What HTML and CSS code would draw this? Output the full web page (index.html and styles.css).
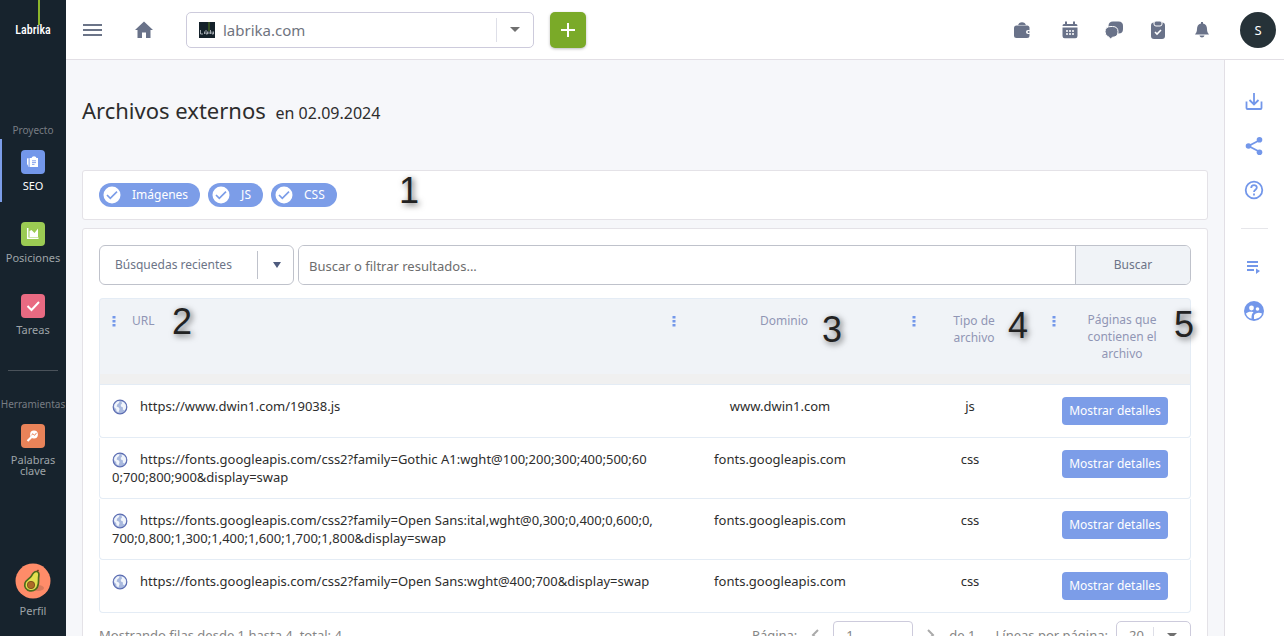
FILE: index.html
```html
<!DOCTYPE html>
<html lang="es">
<head>
<meta charset="utf-8">
<meta name="viewport" content="width=device-width, initial-scale=1">
<title>Archivos externos – Labrika</title>
<link rel="stylesheet" href="styles.css">
</head>
<body>
<svg class="defs" aria-hidden="true">
  <symbol id="globe" viewBox="0 0 16 16"><circle cx="8" cy="8" r="6.800" fill="#a9b9de" stroke="#5c6db2" stroke-width="1.200"/><path d="M2.500 5.500 5 2.500 7.500 2 7 4 5.200 5.400 4.600 7.600 6.800 8.400 7.600 10 6.400 13.500 4.500 12 4.200 10 2 8ZM9.500 2.500 12 3.600 13.800 6 14 9 12.600 11.500 10.800 10.600 11 8.600 9.300 7.800 8.600 6 10 4.600Z" fill="#f1f5fb"/></symbol>
  <symbol id="dots" viewBox="0 0 4 12"><path d="M.5 1h3v2.500h-3zM.5 5h3v2.500h-3zM.5 9h3v2.500h-3z" fill="#7397ea"/></symbol>
  <symbol id="check" viewBox="0 0 18 18"><circle cx="9" cy="9" r="8.500" fill="#fff"/><path d="m4 9 3.300 3.300L14 5.700" fill="none" stroke="#7c9de8" stroke-width="1.700"/></symbol>
</svg>
<div class="app">
  <nav class="sidebar">
    <a class="logo" href="#"><span class="logo-stem"></span>Labrika</a>
    <p class="side-title">Proyecto</p>
    <a class="side-item active" href="#">
      <svg class="tile blue" viewBox="0 0 24 24"><path d="M9 8h1.500q.5-1.800 2.500-1.800T15.500 8H17v9H9zM6 8l1.200.8V16L6 14zM7.600 8h.8v9h-.8z" fill="#fff"/><path d="M11 10.800h4M11 12.600h4M11 14.400h2.500" stroke="#7b9bea" stroke-width=".9"/></svg>
      <span>SEO</span></a>
    <a class="side-item" href="#">
      <svg class="tile green" viewBox="0 0 24 24"><path d="M6.700 6v10.300H17.500" fill="none" stroke="#fff" stroke-width="1.500"/><path d="M8.500 15V9l2-1 3 3L17 6.500V15z" fill="#fff"/></svg>
      <span>Posiciones</span></a>
    <a class="side-item" href="#">
      <svg class="tile pink" viewBox="0 0 24 24"><path d="m6.500 12 4 4 7.500-8" fill="none" stroke="#fff" stroke-width="2"/></svg>
      <span>Tareas</span></a>
    <hr class="side-line">
    <p class="side-title">Herramientas</p>
    <a class="side-item" href="#">
      <svg class="tile orange" viewBox="0 0 24 24"><circle cx="13" cy="10.500" r="3.900" fill="#fff"/><path d="m10.500 13-4 4" stroke="#fff" stroke-width="2.200"/><path d="m10.500 11 1.500-1.300 1.500 1.700 2-2.500" fill="none" stroke="#e88158" stroke-width="1"/></svg>
      <span>Palabras clave</span></a>
    <a class="profile" href="#">
      <svg viewBox="0 0 36 36" width="36" height="36"><circle cx="18" cy="18" r="17.500" fill="#ff8c69"/><ellipse cx="23" cy="25" rx="6" ry="3" fill="#d97a5c"/><path d="M21.500 8.500c2 0 2.800 2 2.300 4.500-.5 3 0 5-.5 8-.7 4.500-4 7.500-8.300 6.800-4-.6-6-4-5-7.500 1-3.800 5-4.500 6.500-7.500 1-2 2.500-4.300 5-4.300z" fill="#e3e04f" stroke="#4d6b1c" stroke-width="1.700"/><circle cx="16" cy="22" r="3.700" fill="#ad6a27" stroke="#744517" stroke-width=".8"/><path d="m22 8.500 1.500-1.500" stroke="#704318" stroke-width="1.500"/></svg>
      <span>Perfil</span></a>
  </nav>

  <div class="page">
    <header class="topbar">
      <button class="icon-btn menu" aria-label="Menú"><svg viewBox="0 0 20 14" width="20" height="14"><path d="M0 2h19M0 7h19M0 12h19" stroke="#6b7488" stroke-width="2"/></svg></button>
      <a class="home" href="#" aria-label="Inicio"><svg viewBox="0 0 18 18" width="18" height="18"><path d="M9 .5 18 9h-2.500v8H11v-5.500H7V17H2.500V9H0z" fill="#697289"/></svg></a>
      <div class="select-box site">
        <svg class="favicon" viewBox="0 0 16 16" width="16" height="16"><path d="M0 0h16v16H0z" fill="#14212a"/><path d="M10 0v9" stroke="#55781f"/><path d="M1.500 8v4H4M5.500 9.500v2.500M7 8v4h1.500V9.500M10 9.500V12M11.500 8v4M13 9.500V12h1.500V9.500" fill="none" stroke="#c5cbd0" stroke-width=".8"/></svg>
        <select aria-label="Proyecto"><option>labrika.com</option></select>
        <svg class="caret" viewBox="0 0 10 5" width="10" height="5"><path d="M0 0h10L5 5z" fill="#707070"/></svg>
      </div>
      <button class="add" aria-label="Añadir"><svg viewBox="0 0 14 14" width="14" height="14"><path d="M7 0v14M0 7h14" stroke="#fff" stroke-width="2"/></svg></button>
      <div class="actions">
        <button class="icon-btn wallet" aria-label="Saldo"><svg viewBox="0 0 18 18"><path d="M5 4.500c.5-4.500 7.500-4.500 8 0z"/><rect x="1" y="4.500" width="15.500" height="12.500" rx="2.500"/><path d="M4.500 4.400h10" stroke="#b9bec9" stroke-width=".8"/><rect x="13" y="9" width="5" height="4" rx="2" fill="#fff"/><circle cx="15.600" cy="11" r="1"/></svg></button>
        <button class="icon-btn" aria-label="Calendario"><svg viewBox="0 0 18 18"><path d="M4 .5h2V3h6V.5h2V3h1Q16.500 3 16.500 5h-15q0-2 1.500-2H4zM1.500 6.500h15V15q0 2.200-2.200 2.200H3.700q-2.200 0-2.200-2.200z"/><path d="M5 10h2M8 10h2M11 10h2M5 13h2M8 13h2M11 13h2" stroke="#fff" stroke-width="1.600"/></svg></button>
        <button class="icon-btn" aria-label="Mensajes"><svg viewBox="0 0 18 18"><path d="M8 .5h5.500Q18 .5 18 5v3q0 4.500-4.500 4.500H8Q4 12 3.500 8V5Q3.500.5 8 .5z"/><path d="M6 5.500h1.500q5.500 0 5.500 5.300T7.500 16.300L5.500 18 4 16.200Q0 15 0 10.800 0 5.500 6 5.500z" stroke="#fff"/></svg></button>
        <button class="icon-btn" aria-label="Tareas"><svg viewBox="0 0 18 18"><rect x="2" y="1.500" width="14" height="16.500" rx="3"/><rect x="5" y="0" width="8" height="5" rx="2" stroke="#fff"/><path d="m6 11 2 2 4-4" fill="none" stroke="#fff" stroke-width="1.600"/></svg></button>
        <button class="icon-btn" aria-label="Avisos"><svg viewBox="0 0 18 18"><path d="M8 1h2v1.500c3 .8 4 3 4 5.500 0 2.500.8 4 2 5.500H2C3.200 12 4 10.500 4 8c0-2.500 1-4.700 4-5.500zM6.500 14.500h5c-.5 2.500-4.500 2.500-5 0z"/></svg></button>
        <button class="avatar">S</button>
      </div>
    </header>

    <div class="content">
      <main>
        <h1>Archivos externos <small>en 02.09.2024</small></h1>
        <section class="card filters">
          <label class="chip"><input type="checkbox" checked><svg><use href="#check"/></svg><span>Imágenes</span></label>
          <label class="chip"><input type="checkbox" checked><svg><use href="#check"/></svg><span>JS</span></label>
          <label class="chip"><input type="checkbox" checked><svg><use href="#check"/></svg><span>CSS</span></label>
          <b class="mark m1">1</b>
        </section>
        <section class="card results">
          <form class="search">
            <div class="select-box recent">
              <select aria-label="Búsquedas recientes"><option>Búsquedas recientes</option></select>
              <svg class="caret" viewBox="0 0 8 6" width="8" height="6"><path d="M0 0h8L4 6z" fill="#4e5b7e"/></svg>
            </div>
            <div class="search-box">
              <input type="text" aria-label="Buscar" placeholder="Buscar o filtrar resultados...">
              <button type="button">Buscar</button>
            </div>
          </form>
          <table>
            <colgroup><col><col class="c-domain"><col class="c-type"><col class="c-pages"></colgroup>
            <thead><tr>
              <th class="url"><svg class="dots"><use href="#dots"/></svg>URL<b class="mark m2">2</b></th>
              <th><svg class="dots"><use href="#dots"/></svg>Dominio<b class="mark m3">3</b></th>
              <th><svg class="dots"><use href="#dots"/></svg>Tipo de archivo<b class="mark m4">4</b></th>
              <th><svg class="dots"><use href="#dots"/></svg>Páginas que contienen el archivo<b class="mark m5">5</b></th>
            </tr></thead>
            <tbody>
              <tr><td class="url"><svg class="globe"><use href="#globe"/></svg>https://www.dwin1.com/19038.js</td><td>www.dwin1.com</td><td>js</td><td class="act"><button>Mostrar detalles</button></td></tr>
              <tr><td class="url"><svg class="globe"><use href="#globe"/></svg>https://fonts.googleapis.com/css2?family=Gothic A1:wght@100;200;300;400;500;60<wbr>0;700;800;900&amp;display=swap</td><td>fonts.googleapis.com</td><td>css</td><td class="act"><button>Mostrar detalles</button></td></tr>
              <tr><td class="url"><svg class="globe"><use href="#globe"/></svg>https://fonts.googleapis.com/css2?family=Open Sans:ital,wght@0,300;0,400;0,600;0,<wbr>700;0,800;1,300;1,400;1,600;1,700;1,800&amp;display=swap</td><td>fonts.googleapis.com</td><td>css</td><td class="act"><button>Mostrar detalles</button></td></tr>
              <tr><td class="url"><svg class="globe"><use href="#globe"/></svg>https://fonts.googleapis.com/css2?family=Open Sans:wght@400;700&amp;display=swap</td><td>fonts.googleapis.com</td><td>css</td><td class="act"><button>Mostrar detalles</button></td></tr>
            </tbody>
          </table>
          <footer class="pager">
            <span class="total">Mostrando filas desde 1 hasta 4, total: 4</span>
            <label for="page">Página:</label>
            <button class="icon-btn arrow" aria-label="Anterior"><svg viewBox="0 0 8 12" width="8" height="12"><path d="M7 1 2 6l5 5" fill="none" stroke="#aaa" stroke-width="2"/></svg></button>
            <input id="page" type="text" value="1">
            <button class="icon-btn arrow" aria-label="Siguiente"><svg viewBox="0 0 8 12" width="8" height="12"><path d="m1 1 5 5-5 5" fill="none" stroke="#aaa" stroke-width="2"/></svg></button>
            <span class="of">de 1</span>
            <label for="lines">Líneas por página:</label>
            <div class="select-box lines"><select id="lines"><option>20</option></select><svg class="caret" viewBox="0 0 10 5" width="10" height="5"><path d="M0 0h10L5 5z" fill="#707070"/></svg></div>
          </footer>
        </section>
      </main>
      <aside class="rail">
        <button class="icon-btn" aria-label="Descargar"><svg viewBox="0 0 20 20" width="20" height="20"><path d="M10 1v11M5.500 8l4.500 4.500L14.500 8M2.500 9.500V16q0 1 1 1h13q1 0 1-1V9.500"/></svg></button>
        <button class="icon-btn" aria-label="Compartir"><svg viewBox="0 0 20 20" width="20" height="20"><path d="M16 4 4.500 10 16 16"/><g fill="#7397ea" stroke="none"><circle cx="15.500" cy="3.800" r="2.800"/><circle cx="4.500" cy="10" r="2.800"/><circle cx="15.500" cy="16.200" r="2.800"/></g></svg></button>
        <button class="icon-btn" aria-label="Ayuda"><svg viewBox="0 0 20 20" width="20" height="20"><circle cx="10" cy="10" r="8.300"/><path d="M7.200 8C7.200 4 13 4.300 12.800 7.700c-.1 2-2.800 2-2.800 4.300M10 13.500v2"/></svg></button>
        <hr>
        <button class="icon-btn" aria-label="Lista"><svg viewBox="0 0 20 20" width="20" height="20"><path d="M3 5h11M3 9h11M3 13h7"/><path d="m12 11.500 4 2.500-4 3z" fill="#7397ea" stroke="none"/></svg></button>
        <button class="icon-btn" aria-label="Grupo"><svg viewBox="0 0 20 20" width="20" height="20"><circle cx="10" cy="10" r="10" fill="#7397ea" stroke="none"/><g fill="#fff" stroke="none"><circle cx="7.500" cy="7" r="2.400"/><circle cx="13.500" cy="8" r="1.800"/><path d="M2 12.500c2-2 5-2 7.500-1.300-1.500 1-2 2.500-2 6.500C4.500 17 2.500 15 2 12.500zM10 18v-3.500c1-3 5.500-3.500 8-2C17.500 15.500 14 18 10 18z"/></g></svg></button>
      </aside>
    </div>
  </div>
</div>
</body>
</html>
```
FILE: styles.css
```css
* { box-sizing: border-box; }
body { margin: 0; font: 13px/18px "Noto Sans", "Open Sans", sans-serif; color: #2d2d2d; background: #f6f7fa; }
button, input, select { font: inherit; color: inherit; margin: 0; }
button { border: 0; padding: 0; background: none; cursor: pointer; }
a { color: inherit; text-decoration: none; }
svg { display: block; flex: none; }
.defs { position: absolute; width: 0; height: 0; }
.app { display: flex; height: 100vh; overflow: hidden; }

.sidebar { width: 66px; flex: none; display: flex; flex-direction: column; align-items: center; background: #17232d; color: #9ea3a8; font-size: 11px; line-height: 11px; text-align: center; padding-bottom: 20px; }
.logo { position: relative; height: 124px; padding-top: 22px; color: #fff; font: 500 12px/16px "Liberation Sans Narrow", "Roboto Condensed", Roboto, sans-serif; }
.logo-stem { position: absolute; left: 23px; top: 0; width: 2px; height: 25px; background: #8cb52b; }
.side-title { margin: 0 0 3px; font-size: 10px; line-height: 12px; color: #777d83; }
.side-item { width: 66px; height: 63px; margin-bottom: 9px; padding-top: 11px; display: flex; flex-direction: column; align-items: center; gap: 6px; }
.side-item.active { border-left: 2px solid #7c9de8; padding-right: 2px; color: #fff; }
.tile { width: 24px; height: 24px; border-radius: 4px; }
.blue { background: #7397ea; }
.green { background: #9bcb53; }
.pink { background: #e96a82; }
.orange { background: #e98359; }
.side-line { width: 50px; border: 0; border-top: 1px solid #4a525a; margin: 15px 0 27px; }
.profile { margin-top: auto; display: flex; flex-direction: column; align-items: center; gap: 6px; }

.page { flex: 1; min-width: 0; display: flex; flex-direction: column; }
.topbar { height: 60px; flex: none; display: flex; align-items: center; padding: 0 8px 0 17px; background: #fff; border-bottom: 1px solid #e2dfe5; }
.icon-btn { display: flex; justify-content: center; align-items: center; }
.home { margin: 0 33px 0 32px; }
.select-box { position: relative; display: flex; align-items: center; background: #fff; border: 1px solid #cdcbdc; border-radius: 5px; }
.select-box select { appearance: none; width: 100%; height: 100%; border: 0; border-radius: inherit; background: none; outline: 0; }
.select-box::after { content: ""; position: absolute; top: 5px; bottom: 5px; right: 36px; width: 1px; background: #dedfe8; }
.caret { position: absolute; right: 13px; pointer-events: none; }
.site { width: 348px; height: 36px; }
.site select { padding-left: 36px; font-size: 15px; color: #6f7480; }
.favicon { position: absolute; left: 12px; }
.add { display: grid; place-items: center; width: 36px; height: 36px; margin-left: 16px; border-radius: 5px; background: #7aaa28; box-shadow: 0 1px 3px #0004; }
.actions { display: flex; align-items: center; gap: 26px; margin-left: auto; }
.actions svg { width: 18px; height: 18px; fill: #697289; }
.wallet { margin-right: 4px; }
.avatar { width: 36px; height: 36px; margin-left: 3px; border-radius: 50%; background: #263238; color: #fff; }

.content { flex: 1; min-height: 0; display: flex; }
main { flex: 1; min-width: 0; padding: 31px 16px 0; }
h1 { margin: 0 0 41px; height: 38px; font-size: 22px; line-height: 38px; font-weight: 400; }
h1 small { font-size: 16px; margin-left: 4px; }
.card { background: #fff; border: 1px solid #e4e2e7; border-radius: 3px; padding: 16px; }
.filters { position: relative; display: flex; align-items: center; gap: 8px; height: 50px; margin-bottom: 8px; padding: 0 16px; }
.chip { position: relative; display: flex; align-items: center; height: 24px; gap: 11px; padding: 0 12px 0 4px; border-radius: 12px; background: #7c9de8; color: #fff; font-size: 12px; cursor: pointer; }
.chip svg { width: 18px; height: 18px; }
.chip input { position: absolute; opacity: 0; }

.search { display: flex; gap: 4px; height: 40px; margin-bottom: 13px; color: #6c7487; }
.recent, .search-box { border: 1px solid #bfc2cb; border-radius: 6px; }
.recent { width: 195px; font-size: 12px; }
.recent::after { background: #bfc2cb; right: 35px; }
.recent .caret { right: 12px; }
.recent select { padding: 0 36px 0 15px; }
.search-box { flex: 1; display: flex; overflow: hidden; }
.search-box input { flex: 1; min-width: 0; padding: 2px 10px 0; border: 0; outline: 0; }
.search-box input::placeholder { color: #6d6d6d; }
.search-box button { width: 115px; border-left: 1px solid #bfc2cb; background: #f0f3f7; font-size: 12px; }

table { width: 100%; table-layout: fixed; border-spacing: 0; }
.c-domain { width: 240px; }
.c-type { width: 140px; }
.c-pages { width: 151px; }
th { position: relative; height: 87px; padding: 13px 24px 0 32px; vertical-align: top; background: #f0f3f7; border: solid #e4ecf5; border-width: 1px 0; box-shadow: inset 0 -10px #f0f0f0; color: #9096b5; font-weight: 400; font-size: 12px; line-height: 17px; }
th:last-child { padding: 12px 20px 0 34px; }
th:first-child, td:first-child { border-left: 1px solid #e4ecf5; }
th:last-child, td:last-child { border-right: 1px solid #e4ecf5; }
th:first-child { border-top-left-radius: 4px; }
th:last-child { border-top-right-radius: 4px; }
.url { text-align: left; }
.dots { position: absolute; left: 12px; top: 16px; width: 4px; height: 12px; }
td { padding: 12px; height: 53px; vertical-align: top; text-align: center; border-bottom: 1px solid #e4ecf5; line-height: 18px; }
td:first-child { border-bottom-left-radius: 4px; }
td:last-child { border-bottom-right-radius: 4px; }
td.url { text-align: left; padding-right: 0; }
.globe { display: inline-block; width: 16px; height: 16px; margin-right: 12px; vertical-align: -4px; }
.act button { height: 28px; width: 106px; border-radius: 4px; background: #7c9de8; color: #fff; font-size: 12px; }

.mark { position: absolute; font: 36px/36px "Liberation Sans", Arial, sans-serif; color: #222; text-shadow: 2px 2px 6px #0009; }
.m1 { left: 316px; top: 2px; }
.m2 { left: 72px; top: 5px; }
.m3 { left: 162px; top: 13px; }
.m4 { left: 108px; top: 9px; }
.m5 { left: 134px; top: 8px; }

.pager { display: flex; align-items: center; height: 28px; margin-top: 8px; color: #858585; }
.total { margin-right: auto; }
.arrow { width: 20px; margin: 0 8px; }
.pager input { width: 80px; height: 28px; padding: 0 12px; border: 1px solid #cdcbdc; border-radius: 4px; }
.of { margin-right: 20px; }
.lines { width: 75px; height: 28px; margin-left: 8px; }
.lines select { padding-left: 12px; }

.rail { width: 60px; flex: none; display: flex; flex-direction: column; align-items: center; gap: 24px; padding: 32px 1px 0 0; background: #fff; border-left: 1px solid #e2dfe5; }
.rail svg { fill: none; stroke: #7397ea; stroke-width: 1.8; }
.rail hr { width: 27px; margin: 4px 0; border: 0; border-top: 1px solid #e6e6ea; }
```
